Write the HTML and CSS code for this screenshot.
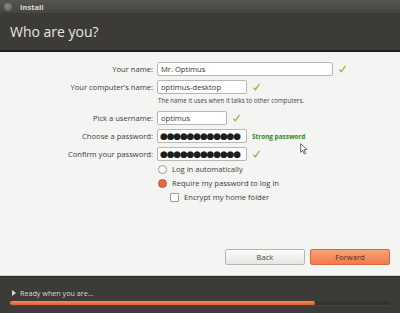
FILE: index.html
```html
<!DOCTYPE html>
<html lang="en">
<head>
    <meta charset="UTF-8">
    <title>Install</title>
    <link rel="stylesheet" href="styles.css">
</head>
<body>
    <div class="window">
        <div class="titlebar">
            <span class="close"></span>
            <span class="title">Install</span>
        </div>
        <div class="header">
            <h1>Who are you?</h1>
        </div>

        <div class="content">
            <div class="form">
                <div class="row">
                    <label>Your name:</label>
                    <div class="field wide">Mr. Optimus</div>
                    <svg class="tick" viewBox="0 0 10 10"><path d="M1 5.5 L3.8 8.5 L9 1.2 L7.6 0.8 L3.6 6.4 L2.2 4.6 Z"/></svg>
                </div>
                <div class="row">
                    <label>Your computer's name:</label>
                    <div class="field mid">optimus-desktop</div>
                    <svg class="tick" viewBox="0 0 10 10"><path d="M1 5.5 L3.8 8.5 L9 1.2 L7.6 0.8 L3.6 6.4 L2.2 4.6 Z"/></svg>
                </div>
                <div class="hint">The name it uses when it talks to other computers.</div>
                <div class="row">
                    <label>Pick a username:</label>
                    <div class="field short">optimus</div>
                    <svg class="tick" viewBox="0 0 10 10"><path d="M1 5.5 L3.8 8.5 L9 1.2 L7.6 0.8 L3.6 6.4 L2.2 4.6 Z"/></svg>
                </div>
                <div class="row">
                    <label>Choose a password:</label>
                    <div class="field mid dots">●●●●●●●●●●●●</div>
                    <span class="strong">Strong password</span>
                </div>
                <div class="row">
                    <label>Confirm your password:</label>
                    <div class="field mid dots">●●●●●●●●●●●●</div>
                    <svg class="tick" viewBox="0 0 10 10"><path d="M1 5.5 L3.8 8.5 L9 1.2 L7.6 0.8 L3.6 6.4 L2.2 4.6 Z"/></svg>
                </div>

                <div class="options">
                    <div class="option"><span class="radio"></span>Log in automatically</div>
                    <div class="option"><span class="radio on"></span>Require my password to log in</div>
                    <div class="option sub"><span class="check"></span>Encrypt my home folder</div>
                </div>
            </div>

            <div class="buttons">
                <button class="btn">Back</button>
                <button class="btn primary">Forward</button>
            </div>

            <svg class="cursor" viewBox="0 0 12 18"><path d="M1 1 L1 14 L4 11 L6.5 16.5 L8.5 15.5 L6 10 L10.5 10 Z" fill="#fff" stroke="#222" stroke-width="1"/></svg>
        </div>

        <div class="footer">
            <div class="status"><span class="arrow"></span>Ready when you are...</div>
            <div class="progress"><div class="bar" style="width: 80.3%"></div></div>
        </div>
    </div>
</body>
</html>
```

FILE: styles.css
```css
body {
    margin: 0;
    font-family: "Open Sans", "DejaVu Sans", sans-serif;
    background: #3c3b37;
}
.window {
    width: 400px;
    height: 313px;
    display: flex;
    flex-direction: column;
    overflow: hidden;
}
.titlebar {
    height: 13px;
    background: linear-gradient(#55544f, #454440);
    display: flex;
    align-items: center;
    padding-left: 4px;
}
.close {
    width: 8px;
    height: 8px;
    border-radius: 50%;
    background: radial-gradient(circle at 40% 35%, #8a8984, #5d5c57);
    margin-right: 8px;
}
.title {
    color: #dfdbd2;
    font-size: 7.5px;
    font-weight: bold;
}
.header {
    height: 37px;
    background: #3c3b37;
    display: flex;
    align-items: center;
    padding-left: 10px;
    border-bottom: 2px solid #1f1e1c;
}
.header h1 {
    margin: 0;
    font-weight: normal;
    font-size: 14px;
    color: #e8e6e1;
}
.content {
    position: relative;
    flex: 1;
    background: #f4f4f3;
    display: flex;
    flex-direction: column;
    justify-content: space-between;
    padding: 10px 10px 10px 0;
    border-bottom: 1px solid #d6d5d2;
}
.form {
    display: flex;
    flex-direction: column;
}
.row {
    display: flex;
    align-items: center;
    height: 14px;
    margin-bottom: 4px;
}
.row label {
    width: 157px;
    padding-right: 4px;
    box-sizing: border-box;
    text-align: right;
    font-size: 7.6px;
    color: #3c3c3c;
}
.field {
    height: 14px;
    box-sizing: border-box;
    border: 1px solid #b8b6b1;
    border-radius: 2px;
    background: #fff;
    font-size: 7.6px;
    color: #333;
    padding: 0 3px;
    line-height: 12px;
    overflow: hidden;
    white-space: nowrap;
}
.wide { width: 176px; }
.mid { width: 90px; }
.short { width: 70px; }
.dots {
    font-size: 9px;
    letter-spacing: -1.2px;
    color: #1e1e1e;
    padding-left: 2px;
}
.tick {
    width: 9px;
    height: 9px;
    margin-left: 5px;
    fill: #8ab736;
}
.strong {
    margin-left: 5px;
    font-size: 6.4px;
    font-weight: bold;
    color: #2a8a1e;
}
.hint {
    margin: -2px 0 6px 158px;
    font-size: 6.2px;
    color: #444;
}
.options {
    margin-top: -3px;
    padding-left: 158px;
}
.option {
    display: flex;
    align-items: center;
    height: 14px;
    font-size: 7.6px;
    color: #3c3c3c;
}
.radio, .check {
    width: 7px;
    height: 7px;
    border: 1px solid #9c9a95;
    background: #fff;
    margin-right: 5px;
    box-sizing: content-box;
}
.radio {
    border-radius: 50%;
}
.radio.on {
    border-color: #b4512c;
    background: radial-gradient(circle, #e96a3e 55%, #d35a32 100%);
}
.check {
    border-radius: 1px;
}
.sub {
    padding-left: 12px;
}
.buttons {
    display: flex;
    justify-content: flex-end;
    gap: 5px;
}
.btn {
    width: 80px;
    height: 16px;
    padding: 0;
    font-family: inherit;
    font-size: 7.6px;
    color: #444;
    border: 1px solid #b7b5b0;
    border-radius: 2px;
    background: linear-gradient(#fbfbfa, #e6e5e2);
}
.btn.primary {
    border-color: #d4683f;
    color: #5a2a18;
    background: linear-gradient(#f9a27e, #ef7a4c);
}
.cursor {
    position: absolute;
    left: 300px;
    top: 91px;
    width: 8px;
    height: 12px;
}
.footer {
    height: 36px;
    background: #3c3b37;
    border-top: 1px solid #2a2927;
    padding: 0 10px;
    display: flex;
    flex-direction: column;
    justify-content: center;
}
.status {
    display: flex;
    align-items: center;
    color: #dcd9d2;
    font-size: 7.2px;
    margin-top: 3px;
}
.arrow {
    width: 0;
    height: 0;
    border-left: 4px solid #dcd9d2;
    border-top: 3px solid transparent;
    border-bottom: 3px solid transparent;
    margin: 0 4px 0 2px;
}
.progress {
    margin-top: 3px;
    height: 4px;
    background: #34332f;
    border-radius: 2px;
    border-bottom: 1px solid #45443f;
}
.bar {
    height: 4px;
    background: linear-gradient(#f3885a, #e2602f);
    border-radius: 2px;
}
```
